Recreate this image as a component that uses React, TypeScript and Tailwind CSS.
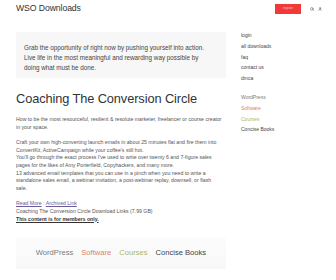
import { Search, User } from 'lucide-react';

const sideLinks = ['login', 'all downloads', 'faq', 'contact us', 'dmca'];

const categories = [
  { name: 'WordPress', color: 'text-[#7a7a7a]' },
  { name: 'Software', color: 'text-[#d9826b]' },
  { name: 'Courses', color: 'text-[#a8b86a]' },
  { name: 'Concise Books', color: 'text-[#444]' },
];

const intro = [
  'How to be the most resourceful, resilient & resolute marketer, freelancer or course creator',
  'in your space.',
];

const features = [
  'Craft your own high-converting launch emails in about 25 minutes flat and fire them into',
  "ConvertKit, ActiveCampaign while your coffee's still hot.",
  "You'll go through the exact process I've used to write over twenty 6 and 7-figure sales",
  'pages for the likes of Amy Porterfield, Copyhackers, and many more.',
  '13 advanced email templates that you can use in a pinch when you need to write a',
  'standalone sales email, a webinar invitation, a post-webinar replay, downsell, or flash',
  'sale.',
];

export default function App() {
  return (
    <div className="w-[336px] h-[280px] overflow-hidden bg-white text-[#333] font-['Liberation_Sans',Arial,sans-serif]">
      {/* Header */}
      <header className="flex items-center h-[16px] pl-[16px] pr-[14px] pt-[1px]">
        <div className="text-[8.7px] text-[#333] tracking-[-0.1px]">WSO Downloads</div>
        <div className="ml-auto flex items-center gap-[4px]">
          <button className="w-[26px] h-[10px] bg-[#f03a3a] text-[3px] text-white/70 mr-[5px]">
            register
          </button>
          <Search className="w-[4px] h-[4px] text-[#555]" strokeWidth={3} />
          <User className="w-[4px] h-[4px] text-[#555]" strokeWidth={3} />
        </div>
      </header>

      <div className="flex pl-[16px] pt-[16px]">
        {/* Main column */}
        <main className="w-[210px] shrink-0">
          <div className="bg-[#f7f7f7] h-[46px] pl-[8px] pr-[16px] pt-[11px] text-[6.3px] leading-[10px] text-[#444]">
            Grab the opportunity of right now by pushing yourself into action. Live life in the most meaningful and rewarding way possible by doing what must be done.
          </div>

          <h1 className="mt-[13px] text-[12.8px] leading-[16px] text-[#333] tracking-[-0.1px]">
            Coaching The Conversion Circle
          </h1>

          <div className="mt-[9px] text-[5.2px] leading-[7.65px] text-[#555] whitespace-nowrap">
            <div>
              {intro.map((l) => (
                <div key={l}>{l}</div>
              ))}
            </div>
            <div className="mt-[7.65px]">
              {features.map((l) => (
                <div key={l}>{l}</div>
              ))}
            </div>
            <div className="mt-[7.65px]">
              <a className="text-[#6a5a9a] underline">Read More</a>
              <span> : </span>
              <a className="text-[#6a5a9a] underline">Archived Link</a>
            </div>
            <div>Coaching The Conversion Circle Download Links (7.99 GB)</div>
            <div className="font-bold underline text-[#333]">This content is for members only.</div>
          </div>

          <div className="mt-[14px] h-[32px] bg-gradient-to-b from-[#fcfcfc] to-[#f8f8f8] flex items-center justify-center gap-[8px] text-[7.6px]">
            {categories.map((c) => (
              <span key={c.name} className={c.color}>
                {c.name}
              </span>
            ))}
          </div>
        </main>

        {/* Sidebar */}
        <aside className="ml-[15px] -mt-[2px] text-[5px] leading-[10.8px] text-[#444]">
          <ul>
            {sideLinks.map((l) => (
              <li key={l}>{l}</li>
            ))}
          </ul>
          <ul className="mt-[8px]">
            {categories.map((c) => (
              <li key={c.name} className={c.color}>
                {c.name}
              </li>
            ))}
          </ul>
        </aside>
      </div>
    </div>
  );
}
